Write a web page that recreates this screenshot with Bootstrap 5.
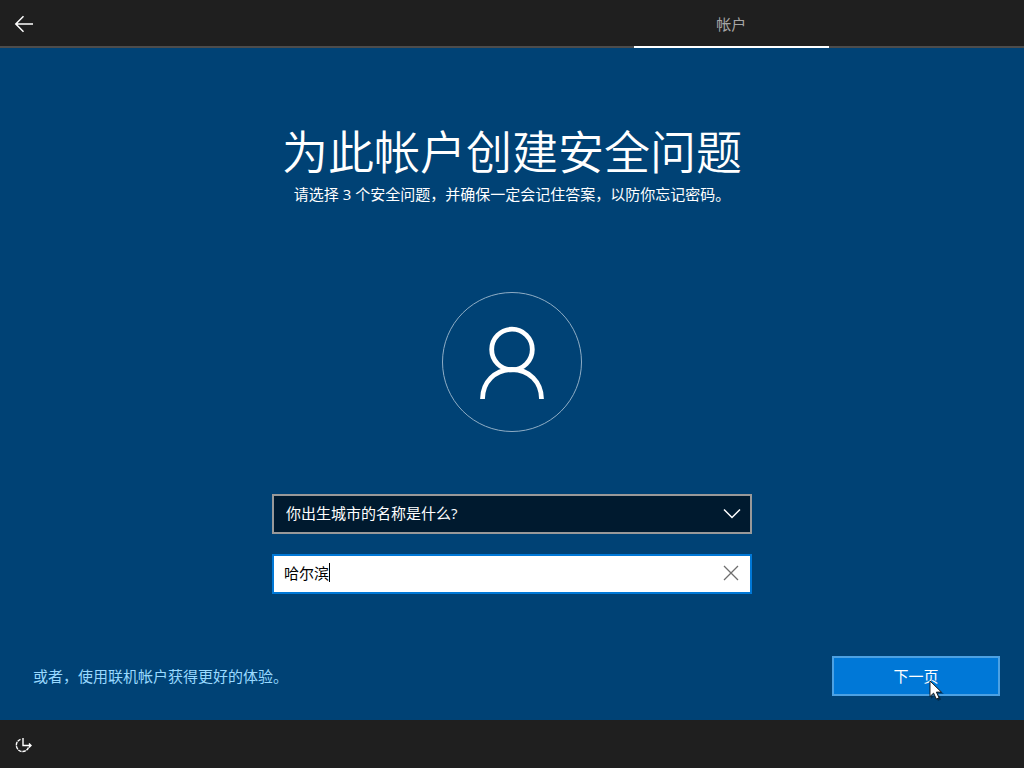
<!DOCTYPE html>
<html lang="zh-CN">
<head>
<meta charset="utf-8">
<meta name="viewport" content="width=device-width, initial-scale=1">
<title>为此帐户创建安全问题</title>
<link rel="stylesheet" href="https://cdn.jsdelivr.net/npm/bootstrap@5.3.0/dist/css/bootstrap.min.css">
<style>
  body { font-family: "Open Sans", "Noto Sans CJK SC", sans-serif; font-size: 15px; line-height: 20px; background: #004275; color: #fff; }
  .setup-bar { background: #1f1f1f; min-height: 48px; }
  .setup-head { border-bottom: 2px solid #4c4c4c; }
  .back-btn { width: 48px; padding: 2px 0 0; }
  .step-tab { width: 20%; margin-left: 60%; margin-bottom: -2px; border-bottom: 2px solid #fff; color: #a6a6a6; line-height: 44px; padding-top: 2px; }
  .page-title { font-size: 46px; font-weight: 350; line-height: 60px; margin-bottom: 5px; font-family: "Noto Sans CJK SC", sans-serif; }
  .intro { padding-top: 71px; }
  .avatar { width: 140px; height: 140px; border: 1px solid #8fadc5; margin-top: 88px; }
  .answers { max-width: 480px; margin-top: 62px; gap: 20px; }
  .field { height: 40px; border: 2px solid #0078d7; border-radius: 0; font-size: 15px; line-height: 24px; padding: 4px 44px 8px 10px; }
  .field:focus { border-color: #0078d7; box-shadow: none; }
  .field-question, .field-question:focus { background: #001a2f; border-color: #999; color: #fff; padding: 5px 44px 7px 12px; }
  .field-answer, .field-answer:focus { background: #fff; color: #000; caret-color: transparent; }
  .field-icon { position: absolute; right: 0; top: 0; width: 40px; height: 40px; }
  .text-caret { position: absolute; left: 57px; top: 9px; width: 1px; height: 19px; background: #000; }
  .page-actions { padding: 0 24px 24px 33px; }
  .online-link { color: #99d9ff; }
  .next-btn { width: 168px; height: 40px; background: #0078d7; border: 2px solid #4ca1e3; border-radius: 0; color: #fff; font-size: 15px; line-height: 20px; }
  .next-btn:hover { background: #0078d7; border-color: #4ca1e3; color: #fff; }
  .pointer { position: absolute; left: 96px; top: 23px; pointer-events: none; }
  .ease-btn { margin-left: 15px; padding: 2px 0 0; }
</style>
</head>
<body class="d-flex flex-column min-vh-100">
  <header class="setup-bar setup-head d-flex align-items-stretch">
    <button type="button" class="back-btn btn border-0 rounded-0 d-flex align-items-center justify-content-center" aria-label="返回">
      <svg width="20" height="18" viewBox="0 0 20 18" fill="none" stroke="#fff" stroke-width="1.5"><path d="M19 9H2M9.500 1.300 1.800 9l7.700 7.700"/></svg>
    </button>
    <nav class="flex-grow-1" aria-label="设置步骤">
      <div class="step-tab text-center" aria-current="step">帐户</div>
    </nav>
  </header>

  <main class="flex-grow-1 d-flex flex-column">
    <div class="intro text-center px-3">
      <h1 class="page-title">为此帐户创建安全问题</h1>
      <p class="mb-0">请选择 3 个安全问题，并确保一定会记住答案，以防你忘记密码。</p>
    </div>

    <div class="avatar rounded-circle mx-auto">
      <svg class="d-block" width="138" height="138" viewBox="0 0 138 138" fill="none" stroke="#fff" stroke-width="4.8"><circle cx="69" cy="56.500" r="20.300"/><path d="M39.500 106C39.500 89 52 76.500 69 76.500S98.500 89 98.500 106"/></svg>
    </div>

    <form class="answers w-100 mx-auto d-flex flex-column">
      <div class="position-relative">
        <label class="visually-hidden" for="question">安全问题</label>
        <select id="question" class="form-select field field-question">
          <option>你出生城市的名称是什么?</option>
        </select>
        <svg class="field-icon pe-none" viewBox="0 0 40 40" fill="none" stroke="#fff" stroke-width="1.5"><path d="m12 15.500 8 8 8-8"/></svg>
      </div>
      <div class="position-relative">
        <label class="visually-hidden" for="answer">答案</label>
        <input id="answer" type="text" class="form-control field field-answer" value="哈尔滨">
        <span class="text-caret"></span>
        <button type="button" class="field-icon btn p-0 border-0" aria-label="清除">
          <svg class="d-block" width="40" height="40" viewBox="0 0 40 40" fill="none" stroke="#6e6e6e" stroke-width="1.3"><path d="m12 12 14 14M26 12 12 26"/></svg>
        </button>
      </div>
    </form>

    <div class="page-actions mt-auto d-flex align-items-center justify-content-between">
      <a href="#" class="online-link text-decoration-none">或者，使用联机帐户获得更好的体验。</a>
      <div class="position-relative">
        <button type="button" class="btn next-btn p-0">下一页</button>
        <svg class="pointer" width="18" height="24" viewBox="0 0 18 24"><path d="M3 3v17l4-4 3 6 3-1.500-2.500-5.500H16z" fill="#000" opacity=".35"/><path d="M2 2v15.500l3.600-3.400 2.700 5.900 2.700-1.200-2.600-5.700h5z" fill="#fff" stroke="#111" stroke-width=".9"/></svg>
      </div>
    </div>
  </main>

  <footer class="setup-bar d-flex align-items-center">
    <button type="button" class="ease-btn btn border-0" aria-label="轻松使用">
      <svg class="d-block" width="17" height="16" viewBox="0 0 17 16" fill="none" stroke="#fff" stroke-width="1.4"><path d="M8 1v7.500h8M14 6.500l2 2-2 2"/><path d="M5.500 2.300A6.300 6.300 0 1 0 13.500 10.500" stroke-dasharray="3.500 .8"/></svg>
    </button>
  </footer>
<script src="https://cdn.jsdelivr.net/npm/bootstrap@5.3.0/dist/js/bootstrap.bundle.min.js"></script>
</body>
</html>
